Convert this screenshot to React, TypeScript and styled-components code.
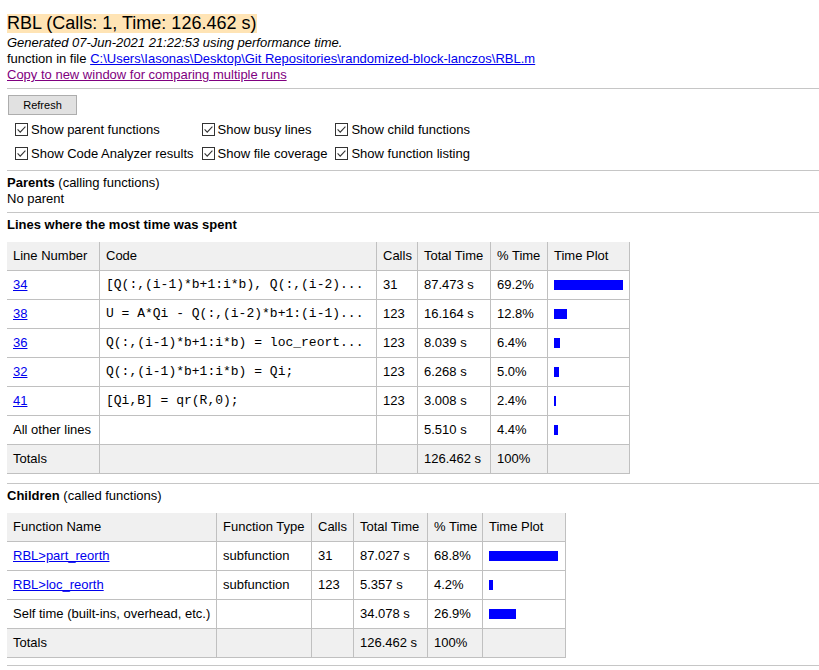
import styled, { createGlobalStyle } from 'styled-components';

const GlobalStyle = createGlobalStyle`
  html, body {
    margin: 0;
    padding: 0;
    background: #ffffff;
  }
  body {
    font-family: 'Liberation Sans', Arial, sans-serif;
    font-size: 13px;
    color: #000000;
  }
`;

interface LineRow {
  line?: string;
  label?: string;
  code: string;
  calls: string;
  total: string;
  pct: number | null;
  pctText: string;
  totals?: boolean;
}

interface ChildRow {
  name?: string;
  label?: string;
  type: string;
  calls: string;
  total: string;
  pct: number | null;
  pctText: string;
  totals?: boolean;
}

const lineRows: LineRow[] = [
  { line: '34', code: '[Q(:,(i-1)*b+1:i*b), Q(:,(i-2)...', calls: '31', total: '87.473 s', pct: 69.2, pctText: '69.2%' },
  { line: '38', code: 'U = A*Qi - Q(:,(i-2)*b+1:(i-1)...', calls: '123', total: '16.164 s', pct: 12.8, pctText: '12.8%' },
  { line: '36', code: 'Q(:,(i-1)*b+1:i*b) = loc_reort...', calls: '123', total: '8.039 s', pct: 6.4, pctText: '6.4%' },
  { line: '32', code: 'Q(:,(i-1)*b+1:i*b) = Qi;', calls: '123', total: '6.268 s', pct: 5.0, pctText: '5.0%' },
  { line: '41', code: '[Qi,B] = qr(R,0);', calls: '123', total: '3.008 s', pct: 2.4, pctText: '2.4%' },
  { label: 'All other lines', code: '', calls: '', total: '5.510 s', pct: 4.4, pctText: '4.4%' },
  { label: 'Totals', code: '', calls: '', total: '126.462 s', pct: null, pctText: '100%', totals: true },
];

const childRows: ChildRow[] = [
  { name: 'RBL>part_reorth', type: 'subfunction', calls: '31', total: '87.027 s', pct: 68.8, pctText: '68.8%' },
  { name: 'RBL>loc_reorth', type: 'subfunction', calls: '123', total: '5.357 s', pct: 4.2, pctText: '4.2%' },
  { label: 'Self time (built-ins, overhead, etc.)', type: '', calls: '', total: '34.078 s', pct: 26.9, pctText: '26.9%' },
  { label: 'Totals', type: '', calls: '', total: '126.462 s', pct: null, pctText: '100%', totals: true },
];

const options = [
  'Show parent functions',
  'Show busy lines',
  'Show child functions',
  'Show Code Analyzer results',
  'Show file coverage',
  'Show function listing',
];

const lineCols = [93, 277, 41, 73, 57, 82];
const childCols = [210, 95, 42, 74, 55, 83];
const sum = (a: number[]) => a.reduce((s, v) => s + v, 0);

function CheckIcon() {
  return (
    <CheckBox viewBox="0 0 13 13" aria-hidden="true">
      <rect x="0.5" y="0.5" width="12" height="12" fill="#fff" stroke="#333" />
      <path d="M2.6 6.4 L5.2 9.1 L10.4 3.6" fill="none" stroke="#333" strokeWidth="1.1" />
    </CheckBox>
  );
}

export default function App() {
  return (
    <>
      <GlobalStyle />
      <Page>
        <Title>RBL (Calls: 1, Time: 126.462 s)</Title>
        <Meta>
          <Generated>Generated 07-Jun-2021 21:22:53 using performance time.</Generated>
          <TextLine>
            function in file{' '}
            <Link href="#">C:\Users\Iasonas\Desktop\Git Repositories\randomized-block-lanczos\RBL.m</Link>
          </TextLine>
          <TextLine>
            <VisitedLink href="#">Copy to new window for comparing multiple runs</VisitedLink>
          </TextLine>
        </Meta>
        <Rule />
        <RefreshButton type="button">Refresh</RefreshButton>
        <OptionGrid>
          {options.map((o) => (
            <Option key={o}>
              <CheckIcon />
              {o}
            </Option>
          ))}
        </OptionGrid>
        <Rule />
        <Section>
          <TextLine>
            <b>Parents</b> (calling functions)
          </TextLine>
          <TextLine>No parent</TextLine>
        </Section>
        <Rule />
        <Section>
          <TextLine>
            <b>Lines where the most time was spent</b>
          </TextLine>
        </Section>
        <Table $w={sum(lineCols)} $top={9}>
          <colgroup>
            {lineCols.map((w, i) => (
              <Col key={i} $w={w} />
            ))}
          </colgroup>
          <thead>
            <tr>
              <Th>Line Number</Th>
              <Th>Code</Th>
              <Th>Calls</Th>
              <Th>Total Time</Th>
              <Th>% Time</Th>
              <Th>Time Plot</Th>
            </tr>
          </thead>
          <tbody>
            {lineRows.map((r, i) => (
              <tr key={i}>
                <Td $shade={r.totals}>{r.line ? <Link href="#">{r.line}</Link> : r.label}</Td>
                <CodeTd $shade={r.totals}>{r.code}</CodeTd>
                <Td $shade={r.totals}>{r.calls}</Td>
                <Td $shade={r.totals}>{r.total}</Td>
                <Td $shade={r.totals}>{r.pctText}</Td>
                <Td $shade={r.totals}>
                  {r.pct !== null && <Bar style={{ width: Math.max(2, Math.round(r.pct)) }} />}
                </Td>
              </tr>
            ))}
          </tbody>
        </Table>
        <Rule $top={9} />
        <Section>
          <TextLine>
            <b>Children</b> (called functions)
          </TextLine>
        </Section>
        <Table $w={sum(childCols)} $top={9}>
          <colgroup>
            {childCols.map((w, i) => (
              <Col key={i} $w={w} />
            ))}
          </colgroup>
          <thead>
            <tr>
              <Th>Function Name</Th>
              <Th>Function Type</Th>
              <Th>Calls</Th>
              <Th>Total Time</Th>
              <Th>% Time</Th>
              <Th>Time Plot</Th>
            </tr>
          </thead>
          <tbody>
            {childRows.map((r, i) => (
              <tr key={i}>
                <Td $shade={r.totals}>{r.name ? <Link href="#">{r.name}</Link> : r.label}</Td>
                <Td $shade={r.totals}>{r.type}</Td>
                <Td $shade={r.totals}>{r.calls}</Td>
                <Td $shade={r.totals}>{r.total}</Td>
                <Td $shade={r.totals}>{r.pctText}</Td>
                <Td $shade={r.totals}>
                  {r.pct !== null && <Bar style={{ width: Math.max(2, Math.round(r.pct)) }} />}
                </Td>
              </tr>
            ))}
          </tbody>
        </Table>
        <Rule $top={7} />
      </Page>
    </>
  );
}

const Page = styled.div`
  padding: 14px 0 0 7px;
`;

const Title = styled.div`
  display: inline-block;
  background: #ffe4b5;
  font-size: 18px;
  line-height: 19px;
  height: 19px;
  padding-right: 1px;
  vertical-align: top;
`;

const Meta = styled.div`
  margin-top: 2px;
`;

const TextLine = styled.div`
  line-height: 16px;
  white-space: nowrap;
`;

const Generated = styled(TextLine)`
  font-style: italic;
`;

const Link = styled.a`
  color: #0000ee;
  text-decoration: underline;
`;

const VisitedLink = styled(Link)`
  color: #800080;
`;

const Rule = styled.hr<{ $top?: number }>`
  border: none;
  border-top: 1px solid #c6c6c6;
  margin: ${({ $top }) => $top ?? 5}px 0 0 0;
  height: 0;
`;

const RefreshButton = styled.button`
  display: block;
  margin: 6px 0 0 1px;
  width: 69px;
  height: 20px;
  padding: 0;
  background: #e1e1e1;
  border: 1px solid #adadad;
  font-family: 'Liberation Sans', Arial, sans-serif;
  font-size: 11px;
  color: #000;
`;

const OptionGrid = styled.div`
  display: grid;
  grid-template-columns: auto auto auto;
  justify-content: start;
  column-gap: 8px;
  margin: 2px 0 0 8px;
`;

const Option = styled.div`
  display: flex;
  align-items: center;
  gap: 3px;
  height: 24px;
  white-space: nowrap;
`;

const CheckBox = styled.svg`
  width: 13px;
  height: 13px;
  flex: none;
`;

const Section = styled.div`
  margin-top: 4px;
`;

const Table = styled.table<{ $w: number; $top: number }>`
  margin-top: ${({ $top }) => $top}px;
  border-collapse: separate;
  border-spacing: 0;
  table-layout: fixed;
  width: ${({ $w }) => $w}px;
`;

const Col = styled.col<{ $w: number }>`
  width: ${({ $w }) => $w}px;
`;

const cellBase = `
  box-sizing: border-box;
  padding: 7px 6px 7px 6px;
  height: 29px;
  line-height: 14px;
  text-align: left;
  vertical-align: middle;
  border-right: 1px solid #c0c0c0;
  border-bottom: 1px solid #c0c0c0;
  white-space: nowrap;
  overflow: hidden;
  font-size: 13px;
`;

const Th = styled.th`
  ${cellBase}
  font-weight: normal;
  background: #f0f0f0;
`;

const Td = styled.td<{ $shade?: boolean }>`
  ${cellBase}
  background: ${({ $shade }) => ($shade ? '#f0f0f0' : '#ffffff')};
`;

const CodeTd = styled(Td)`
  font-family: 'Liberation Mono', 'Courier New', monospace;
  font-size: 13px;
`;

const Bar = styled.div`
  height: 10px;
  background: #0000ff;
`;
